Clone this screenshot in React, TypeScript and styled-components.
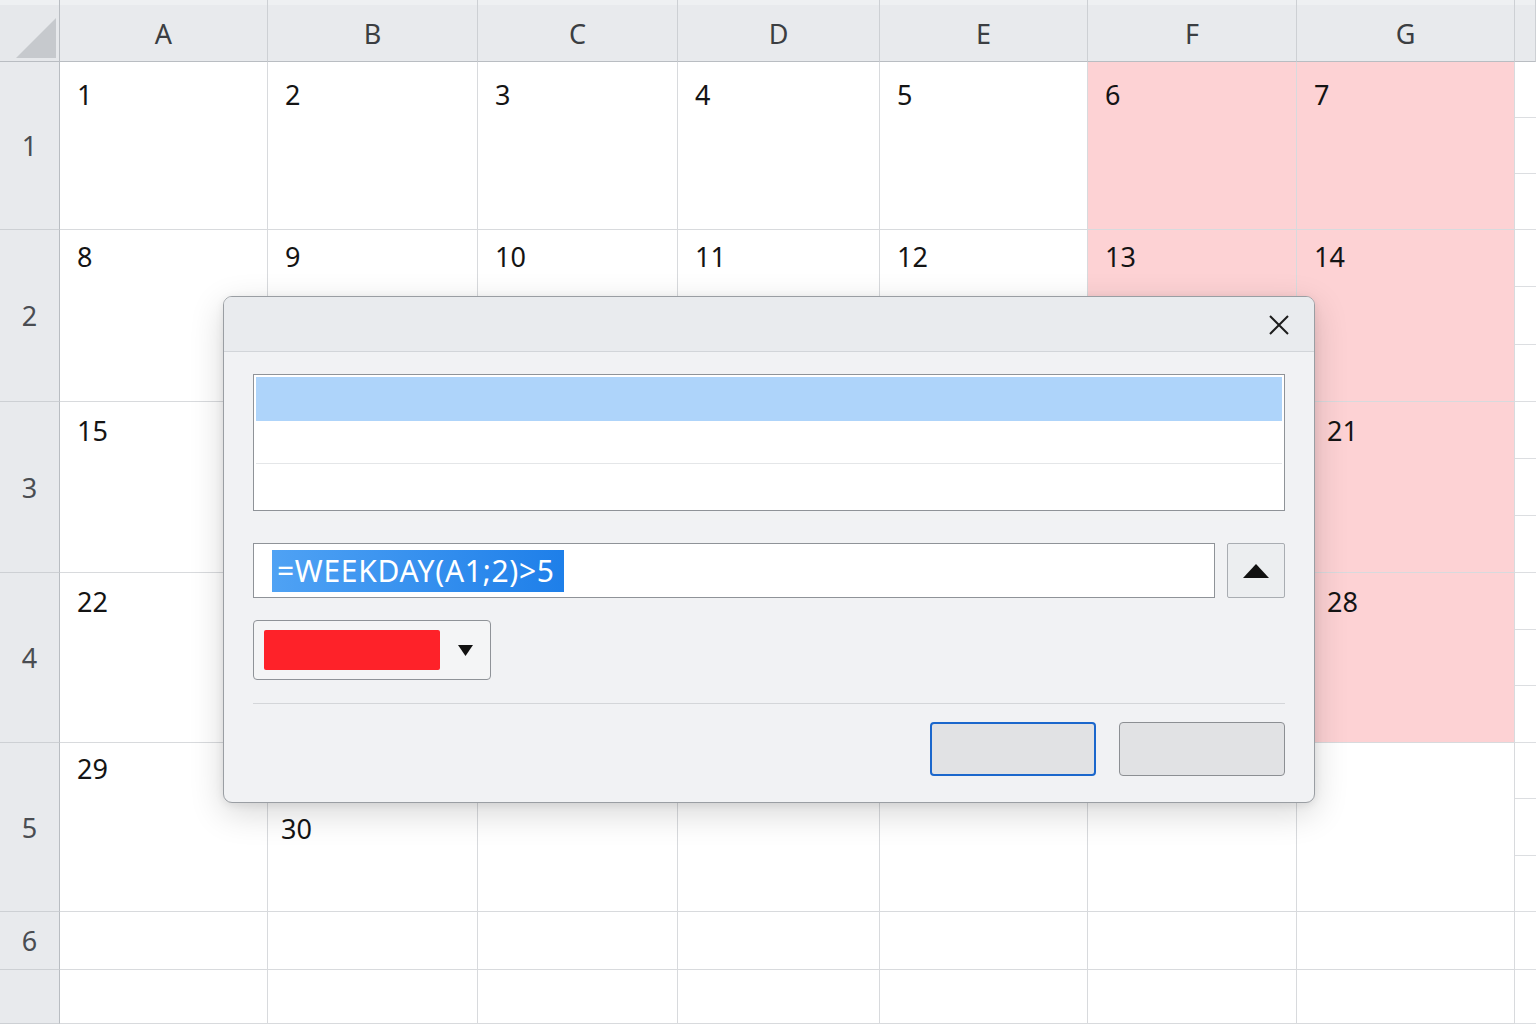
import React from "react";
import styled, { createGlobalStyle } from "styled-components";

const GlobalStyle = createGlobalStyle`
  html, body {
    margin: 0;
    padding: 0;
    background: #ffffff;
    overflow: hidden;
  }
  * {
    box-sizing: border-box;
  }
`;

const COLS = ["A", "B", "C", "D", "E", "F", "G"];
const COL_WIDTHS = [208, 210, 200, 202, 208, 209, 218];
const ROW_HEIGHTS = [168, 172, 171, 170, 169, 58, 54];
const ROW_TOP = [15, 9, 11, 11, 8, 0, 0];

// a few numbers sit off the usual spot in the picture
const OFFSETS: Record<string, { top?: number; left?: number }> = {
  "2-6": { left: 30 },
  "3-6": { left: 30 },
  "4-1": { top: 68, left: 13 },
};

const Page = styled.div`
  position: relative;
  width: 1536px;
  height: 1024px;
  overflow: hidden;
  font-family: "Noto Sans", "Open Sans", "Liberation Sans", sans-serif;
`;

const Sheet = styled.div`
  display: grid;
  grid-template-columns: 60px ${COL_WIDTHS.map((w) => `${w}px`).join(" ")} 21px;
  grid-template-rows: 62px ${ROW_HEIGHTS.map((h) => `${h}px`).join(" ")};
`;

const Corner = styled.div`
  background: linear-gradient(#eef0f2 0 5px, #e6e8eb 5px);
  border-right: 1px solid #b9bdc2;
  border-bottom: 1px solid #b9bdc2;
  display: flex;
  align-items: flex-end;
  justify-content: flex-end;
  padding: 0 3px 3px 0;
`;

const ColHeader = styled.div`
  background: linear-gradient(#eef0f2 0 5px, #e8eaed 5px);
  border-right: 1px solid #cdd0d4;
  border-bottom: 1px solid #b9bdc2;
  display: flex;
  align-items: center;
  justify-content: center;
  padding-top: 5px;
  font-size: 27px;
  color: #3b3e42;
`;

const RowHeader = styled.div`
  background: #e8eaed;
  border-right: 1px solid #b9bdc2;
  border-bottom: 1px solid #cdd0d4;
  display: flex;
  align-items: center;
  justify-content: center;
  font-size: 27px;
  color: #4a4d52;
`;

const Cell = styled.div<{ $pink: boolean; $top: number; $left: number }>`
  background: ${(p) => (p.$pink ? "#fdd2d4" : "#ffffff")};
  border-right: 1px solid #d8dadd;
  border-bottom: 1px solid #d8dadd;
  padding: ${(p) => p.$top}px 0 0 ${(p) => p.$left}px;
  font-size: 27px;
  line-height: 36px;
  color: #141414;
`;

const EdgeCell = styled.div`
  display: flex;
  flex-direction: column;
  background: #ffffff;
`;

const EdgeLine = styled.div`
  flex: 1;
  border-bottom: 1px solid #dcdee1;
`;

const Dialog = styled.div`
  position: absolute;
  left: 223px;
  top: 296px;
  width: 1092px;
  height: 507px;
  background: #f1f2f4;
  border: 1px solid #9a9ea3;
  border-radius: 9px;
  box-shadow: 0 10px 34px rgba(0, 0, 0, 0.16), 0 2px 8px rgba(0, 0, 0, 0.08);
  display: flex;
  flex-direction: column;
  overflow: hidden;
`;

const TitleBar = styled.div`
  height: 55px;
  flex: none;
  background: #e9ebee;
  border-bottom: 1px solid #d2d5d9;
  display: flex;
  align-items: center;
  justify-content: flex-end;
  padding-right: 22px;
`;

const CloseButton = styled.button`
  width: 26px;
  height: 26px;
  padding: 0;
  border: 0;
  background: transparent;
  display: flex;
  align-items: center;
  justify-content: center;
  margin-top: 2px;
`;

const Body = styled.div`
  flex: 1;
  padding: 22px 29px 0 29px;
  display: flex;
  flex-direction: column;
`;

const ListBox = styled.div`
  height: 137px;
  border: 1px solid #8f9398;
  background: #ffffff;
  padding: 2px;
  display: flex;
  flex-direction: column;
`;

const ListItem = styled.div<{ $selected?: boolean; $divider?: boolean }>`
  flex: 1;
  background: ${(p) => (p.$selected ? "#aed4fa" : "#ffffff")};
  border-bottom: 1px solid ${(p) => (p.$divider ? "#e4e6e8" : "transparent")};
`;

const FormulaRow = styled.div`
  margin-top: 32px;
  height: 55px;
  display: flex;
  gap: 12px;
`;

const FormulaInput = styled.div`
  flex: 1;
  border: 1px solid #8f9398;
  background: #ffffff;
  display: flex;
  align-items: center;
  padding-left: 18px;
`;

const Selection = styled.span`
  height: 42px;
  line-height: 42px;
  padding: 0 9px 0 5px;
  background: linear-gradient(90deg, #4fa2f4, #1e7fe9);
  color: #ffffff;
  font-size: 30px;
  letter-spacing: 0.7px;
`;

const CollapseButton = styled.button`
  width: 58px;
  border: 1px solid #a9adb2;
  border-radius: 2px;
  background: #eceef0;
  display: flex;
  align-items: center;
  justify-content: center;
  padding: 0;
`;

const ColorPicker = styled.div`
  margin-top: 22px;
  width: 238px;
  height: 60px;
  border: 1px solid #8f9398;
  border-radius: 4px;
  background: #f4f5f6;
  display: flex;
  align-items: center;
  padding-left: 10px;
`;

const Swatch = styled.div<{ $color: string }>`
  width: 176px;
  height: 40px;
  border-radius: 2px;
  background: ${(p) => p.$color};
`;

const Caret = styled.div`
  flex: 1;
  display: flex;
  justify-content: center;
`;

const Separator = styled.div`
  margin-top: 23px;
  height: 1px;
  background: #d4d6d9;
`;

const ButtonRow = styled.div`
  margin-top: 18px;
  display: flex;
  justify-content: flex-end;
  gap: 23px;
`;

const DialogButton = styled.button<{ $primary?: boolean }>`
  width: 166px;
  height: 54px;
  border-radius: 4px;
  background: #e1e2e4;
  border: ${(p) => (p.$primary ? "2px solid #1b67cc" : "1px solid #8c8f93")};
`;

const Triangle = ({ up }: { up?: boolean }) =>
  up ? (
    <svg width="26" height="14" viewBox="0 0 26 14">
      <path d="M13 0 L26 14 L0 14 Z" fill="#111" />
    </svg>
  ) : (
    <svg width="15" height="11" viewBox="0 0 15 11">
      <path d="M0 0 L15 0 L7.5 11 Z" fill="#111" />
    </svg>
  );

// numbers under the dialog are not shown
const cellValue = (r: number, c: number) => {
  if (r > 4) return "";
  if ((r === 2 || r === 3) && c >= 1 && c <= 5) return "";
  const day = r * 7 + c + 1;
  return day <= 30 ? String(day) : "";
};

const App: React.FC = () => {
  return (
    <Page>
      <GlobalStyle />
      <Sheet>
        <Corner>
          <svg width="40" height="40" viewBox="0 0 40 40">
            <path d="M0 40 L40 40 L40 0 Z" fill="#c6c9cd" />
          </svg>
        </Corner>
        {COLS.map((c) => (
          <ColHeader key={`h-${c}`}>{c}</ColHeader>
        ))}
        <ColHeader />
        {ROW_HEIGHTS.map((h, r) => (
          <React.Fragment key={`row-${r}`}>
            <RowHeader>{r < 6 ? r + 1 : ""}</RowHeader>
            {COLS.map((c, ci) => {
              const off = OFFSETS[`${r}-${ci}`] || {};
              return (
                <Cell
                  key={`${r}-${c}`}
                  $pink={r < 4 && ci >= 5}
                  $top={off.top ?? ROW_TOP[r]}
                  $left={off.left ?? 17}
                >
                  {cellValue(r, ci)}
                </Cell>
              );
            })}
            <EdgeCell>
              {Array.from({ length: h > 100 ? 3 : 1 }).map((_, i) => (
                <EdgeLine key={i} />
              ))}
            </EdgeCell>
          </React.Fragment>
        ))}
      </Sheet>

      <Dialog>
        <TitleBar>
          <CloseButton>
            <svg width="22" height="22" viewBox="0 0 22 22">
              <path d="M2 2 L20 20 M20 2 L2 20" stroke="#1d1d1d" strokeWidth="2" />
            </svg>
          </CloseButton>
        </TitleBar>
        <Body>
          <ListBox>
            <ListItem $selected />
            <ListItem $divider />
            <ListItem />
          </ListBox>
          <FormulaRow>
            <FormulaInput>
              <Selection>=WEEKDAY(A1;2)&gt;5</Selection>
            </FormulaInput>
            <CollapseButton>
              <Triangle up />
            </CollapseButton>
          </FormulaRow>
          <ColorPicker>
            <Swatch $color="#fe2229" />
            <Caret>
              <Triangle />
            </Caret>
          </ColorPicker>
          <Separator />
          <ButtonRow>
            <DialogButton $primary />
            <DialogButton />
          </ButtonRow>
        </Body>
      </Dialog>
    </Page>
  );
};

export default App;
